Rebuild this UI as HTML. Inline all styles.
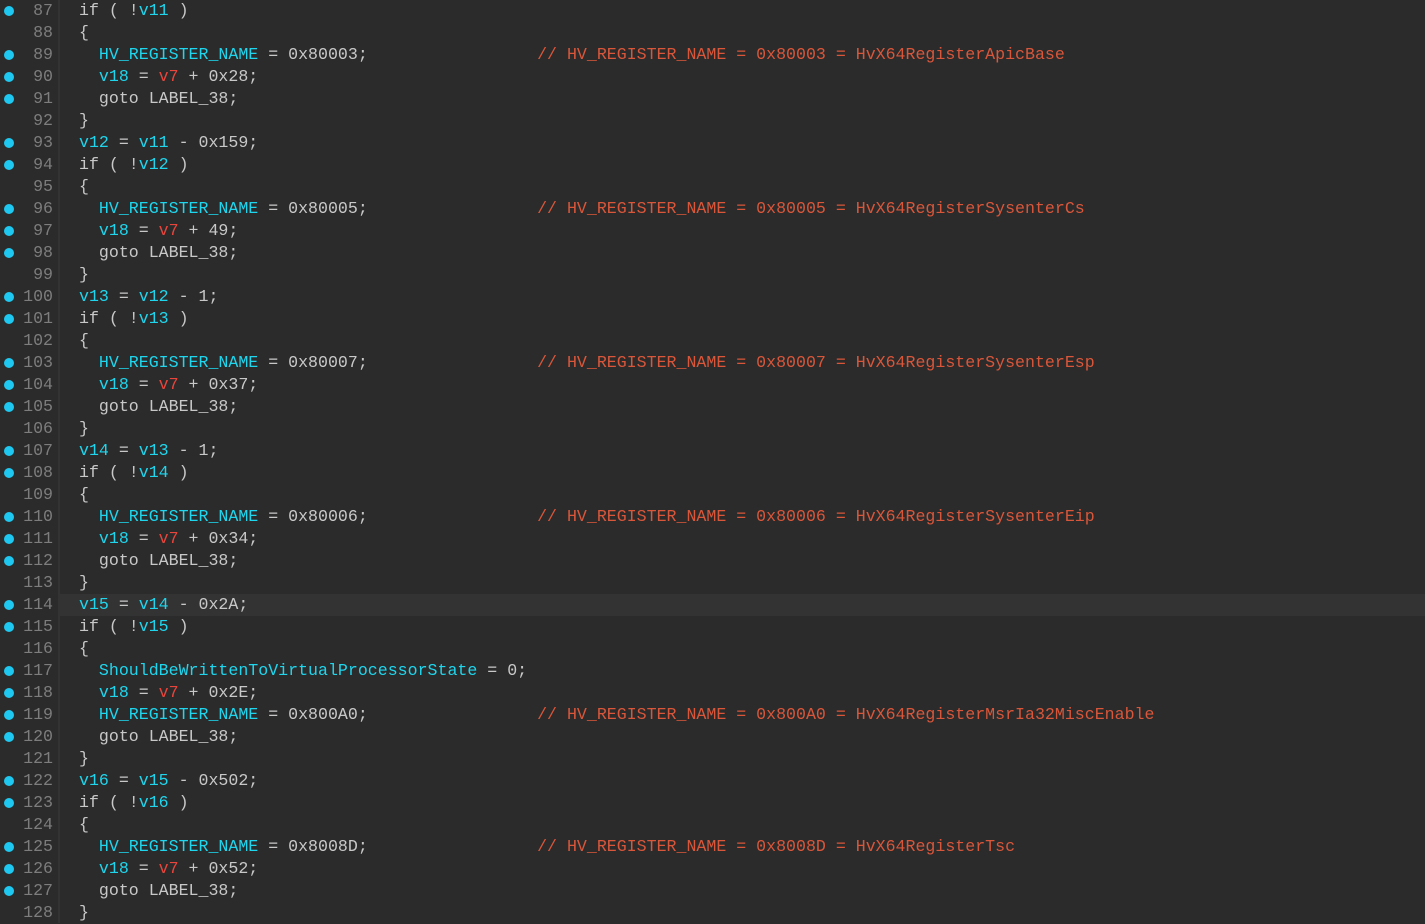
<!DOCTYPE html><html><head><style>
body{margin:0;background:#2b2b2b;width:1425px;height:923px;overflow:hidden;font-family:"Liberation Mono",monospace;font-size:16.6px;}
.sep{position:absolute;left:58px;top:0;width:2px;height:923px;background:#333;}
.r{position:absolute;left:0;width:1425px;height:22px;line-height:22px;white-space:pre;color:#c8c8c8;}
.r.h{background:#333;left:60px;}
.d{position:absolute;left:4px;top:6px;width:10px;height:10px;border-radius:50%;background:#1ec8f0;}
.n{position:absolute;left:0;width:53px;text-align:right;color:#7d7d7d;}
.c{position:absolute;left:79px;}
.h .c{left:19px}
.h .n{left:-60px}
.h .d{left:-56px}
.b{color:#1ed6ee}.v{color:#e8453c}.m{color:#d9563a}
</style></head><body><div class="sep"></div>
<div class="r" style="top:0px"><span class="d"></span><span class="n">87</span><span class="c">if ( !<span class="b">v11</span> )</span></div>
<div class="r" style="top:22px"><span class="n">88</span><span class="c">{</span></div>
<div class="r" style="top:44px"><span class="d"></span><span class="n">89</span><span class="c">  <span class="b">HV_REGISTER_NAME</span> = 0x80003;                 <span class="m">// HV_REGISTER_NAME = 0x80003 = HvX64RegisterApicBase</span></span></div>
<div class="r" style="top:66px"><span class="d"></span><span class="n">90</span><span class="c">  <span class="b">v18</span> = <span class="v">v7</span> + 0x28;</span></div>
<div class="r" style="top:88px"><span class="d"></span><span class="n">91</span><span class="c">  goto LABEL_38;</span></div>
<div class="r" style="top:110px"><span class="n">92</span><span class="c">}</span></div>
<div class="r" style="top:132px"><span class="d"></span><span class="n">93</span><span class="c"><span class="b">v12</span> = <span class="b">v11</span> - 0x159;</span></div>
<div class="r" style="top:154px"><span class="d"></span><span class="n">94</span><span class="c">if ( !<span class="b">v12</span> )</span></div>
<div class="r" style="top:176px"><span class="n">95</span><span class="c">{</span></div>
<div class="r" style="top:198px"><span class="d"></span><span class="n">96</span><span class="c">  <span class="b">HV_REGISTER_NAME</span> = 0x80005;                 <span class="m">// HV_REGISTER_NAME = 0x80005 = HvX64RegisterSysenterCs</span></span></div>
<div class="r" style="top:220px"><span class="d"></span><span class="n">97</span><span class="c">  <span class="b">v18</span> = <span class="v">v7</span> + 49;</span></div>
<div class="r" style="top:242px"><span class="d"></span><span class="n">98</span><span class="c">  goto LABEL_38;</span></div>
<div class="r" style="top:264px"><span class="n">99</span><span class="c">}</span></div>
<div class="r" style="top:286px"><span class="d"></span><span class="n">100</span><span class="c"><span class="b">v13</span> = <span class="b">v12</span> - 1;</span></div>
<div class="r" style="top:308px"><span class="d"></span><span class="n">101</span><span class="c">if ( !<span class="b">v13</span> )</span></div>
<div class="r" style="top:330px"><span class="n">102</span><span class="c">{</span></div>
<div class="r" style="top:352px"><span class="d"></span><span class="n">103</span><span class="c">  <span class="b">HV_REGISTER_NAME</span> = 0x80007;                 <span class="m">// HV_REGISTER_NAME = 0x80007 = HvX64RegisterSysenterEsp</span></span></div>
<div class="r" style="top:374px"><span class="d"></span><span class="n">104</span><span class="c">  <span class="b">v18</span> = <span class="v">v7</span> + 0x37;</span></div>
<div class="r" style="top:396px"><span class="d"></span><span class="n">105</span><span class="c">  goto LABEL_38;</span></div>
<div class="r" style="top:418px"><span class="n">106</span><span class="c">}</span></div>
<div class="r" style="top:440px"><span class="d"></span><span class="n">107</span><span class="c"><span class="b">v14</span> = <span class="b">v13</span> - 1;</span></div>
<div class="r" style="top:462px"><span class="d"></span><span class="n">108</span><span class="c">if ( !<span class="b">v14</span> )</span></div>
<div class="r" style="top:484px"><span class="n">109</span><span class="c">{</span></div>
<div class="r" style="top:506px"><span class="d"></span><span class="n">110</span><span class="c">  <span class="b">HV_REGISTER_NAME</span> = 0x80006;                 <span class="m">// HV_REGISTER_NAME = 0x80006 = HvX64RegisterSysenterEip</span></span></div>
<div class="r" style="top:528px"><span class="d"></span><span class="n">111</span><span class="c">  <span class="b">v18</span> = <span class="v">v7</span> + 0x34;</span></div>
<div class="r" style="top:550px"><span class="d"></span><span class="n">112</span><span class="c">  goto LABEL_38;</span></div>
<div class="r" style="top:572px"><span class="n">113</span><span class="c">}</span></div>
<div class="r h" style="top:594px"><span class="d"></span><span class="n">114</span><span class="c"><span class="b">v15</span> = <span class="b">v14</span> - 0x2A;</span></div>
<div class="r" style="top:616px"><span class="d"></span><span class="n">115</span><span class="c">if ( !<span class="b">v15</span> )</span></div>
<div class="r" style="top:638px"><span class="n">116</span><span class="c">{</span></div>
<div class="r" style="top:660px"><span class="d"></span><span class="n">117</span><span class="c">  <span class="b">ShouldBeWrittenToVirtualProcessorState</span> = 0;</span></div>
<div class="r" style="top:682px"><span class="d"></span><span class="n">118</span><span class="c">  <span class="b">v18</span> = <span class="v">v7</span> + 0x2E;</span></div>
<div class="r" style="top:704px"><span class="d"></span><span class="n">119</span><span class="c">  <span class="b">HV_REGISTER_NAME</span> = 0x800A0;                 <span class="m">// HV_REGISTER_NAME = 0x800A0 = HvX64RegisterMsrIa32MiscEnable</span></span></div>
<div class="r" style="top:726px"><span class="d"></span><span class="n">120</span><span class="c">  goto LABEL_38;</span></div>
<div class="r" style="top:748px"><span class="n">121</span><span class="c">}</span></div>
<div class="r" style="top:770px"><span class="d"></span><span class="n">122</span><span class="c"><span class="b">v16</span> = <span class="b">v15</span> - 0x502;</span></div>
<div class="r" style="top:792px"><span class="d"></span><span class="n">123</span><span class="c">if ( !<span class="b">v16</span> )</span></div>
<div class="r" style="top:814px"><span class="n">124</span><span class="c">{</span></div>
<div class="r" style="top:836px"><span class="d"></span><span class="n">125</span><span class="c">  <span class="b">HV_REGISTER_NAME</span> = 0x8008D;                 <span class="m">// HV_REGISTER_NAME = 0x8008D = HvX64RegisterTsc</span></span></div>
<div class="r" style="top:858px"><span class="d"></span><span class="n">126</span><span class="c">  <span class="b">v18</span> = <span class="v">v7</span> + 0x52;</span></div>
<div class="r" style="top:880px"><span class="d"></span><span class="n">127</span><span class="c">  goto LABEL_38;</span></div>
<div class="r" style="top:902px"><span class="n">128</span><span class="c">}</span></div>
</body></html>
